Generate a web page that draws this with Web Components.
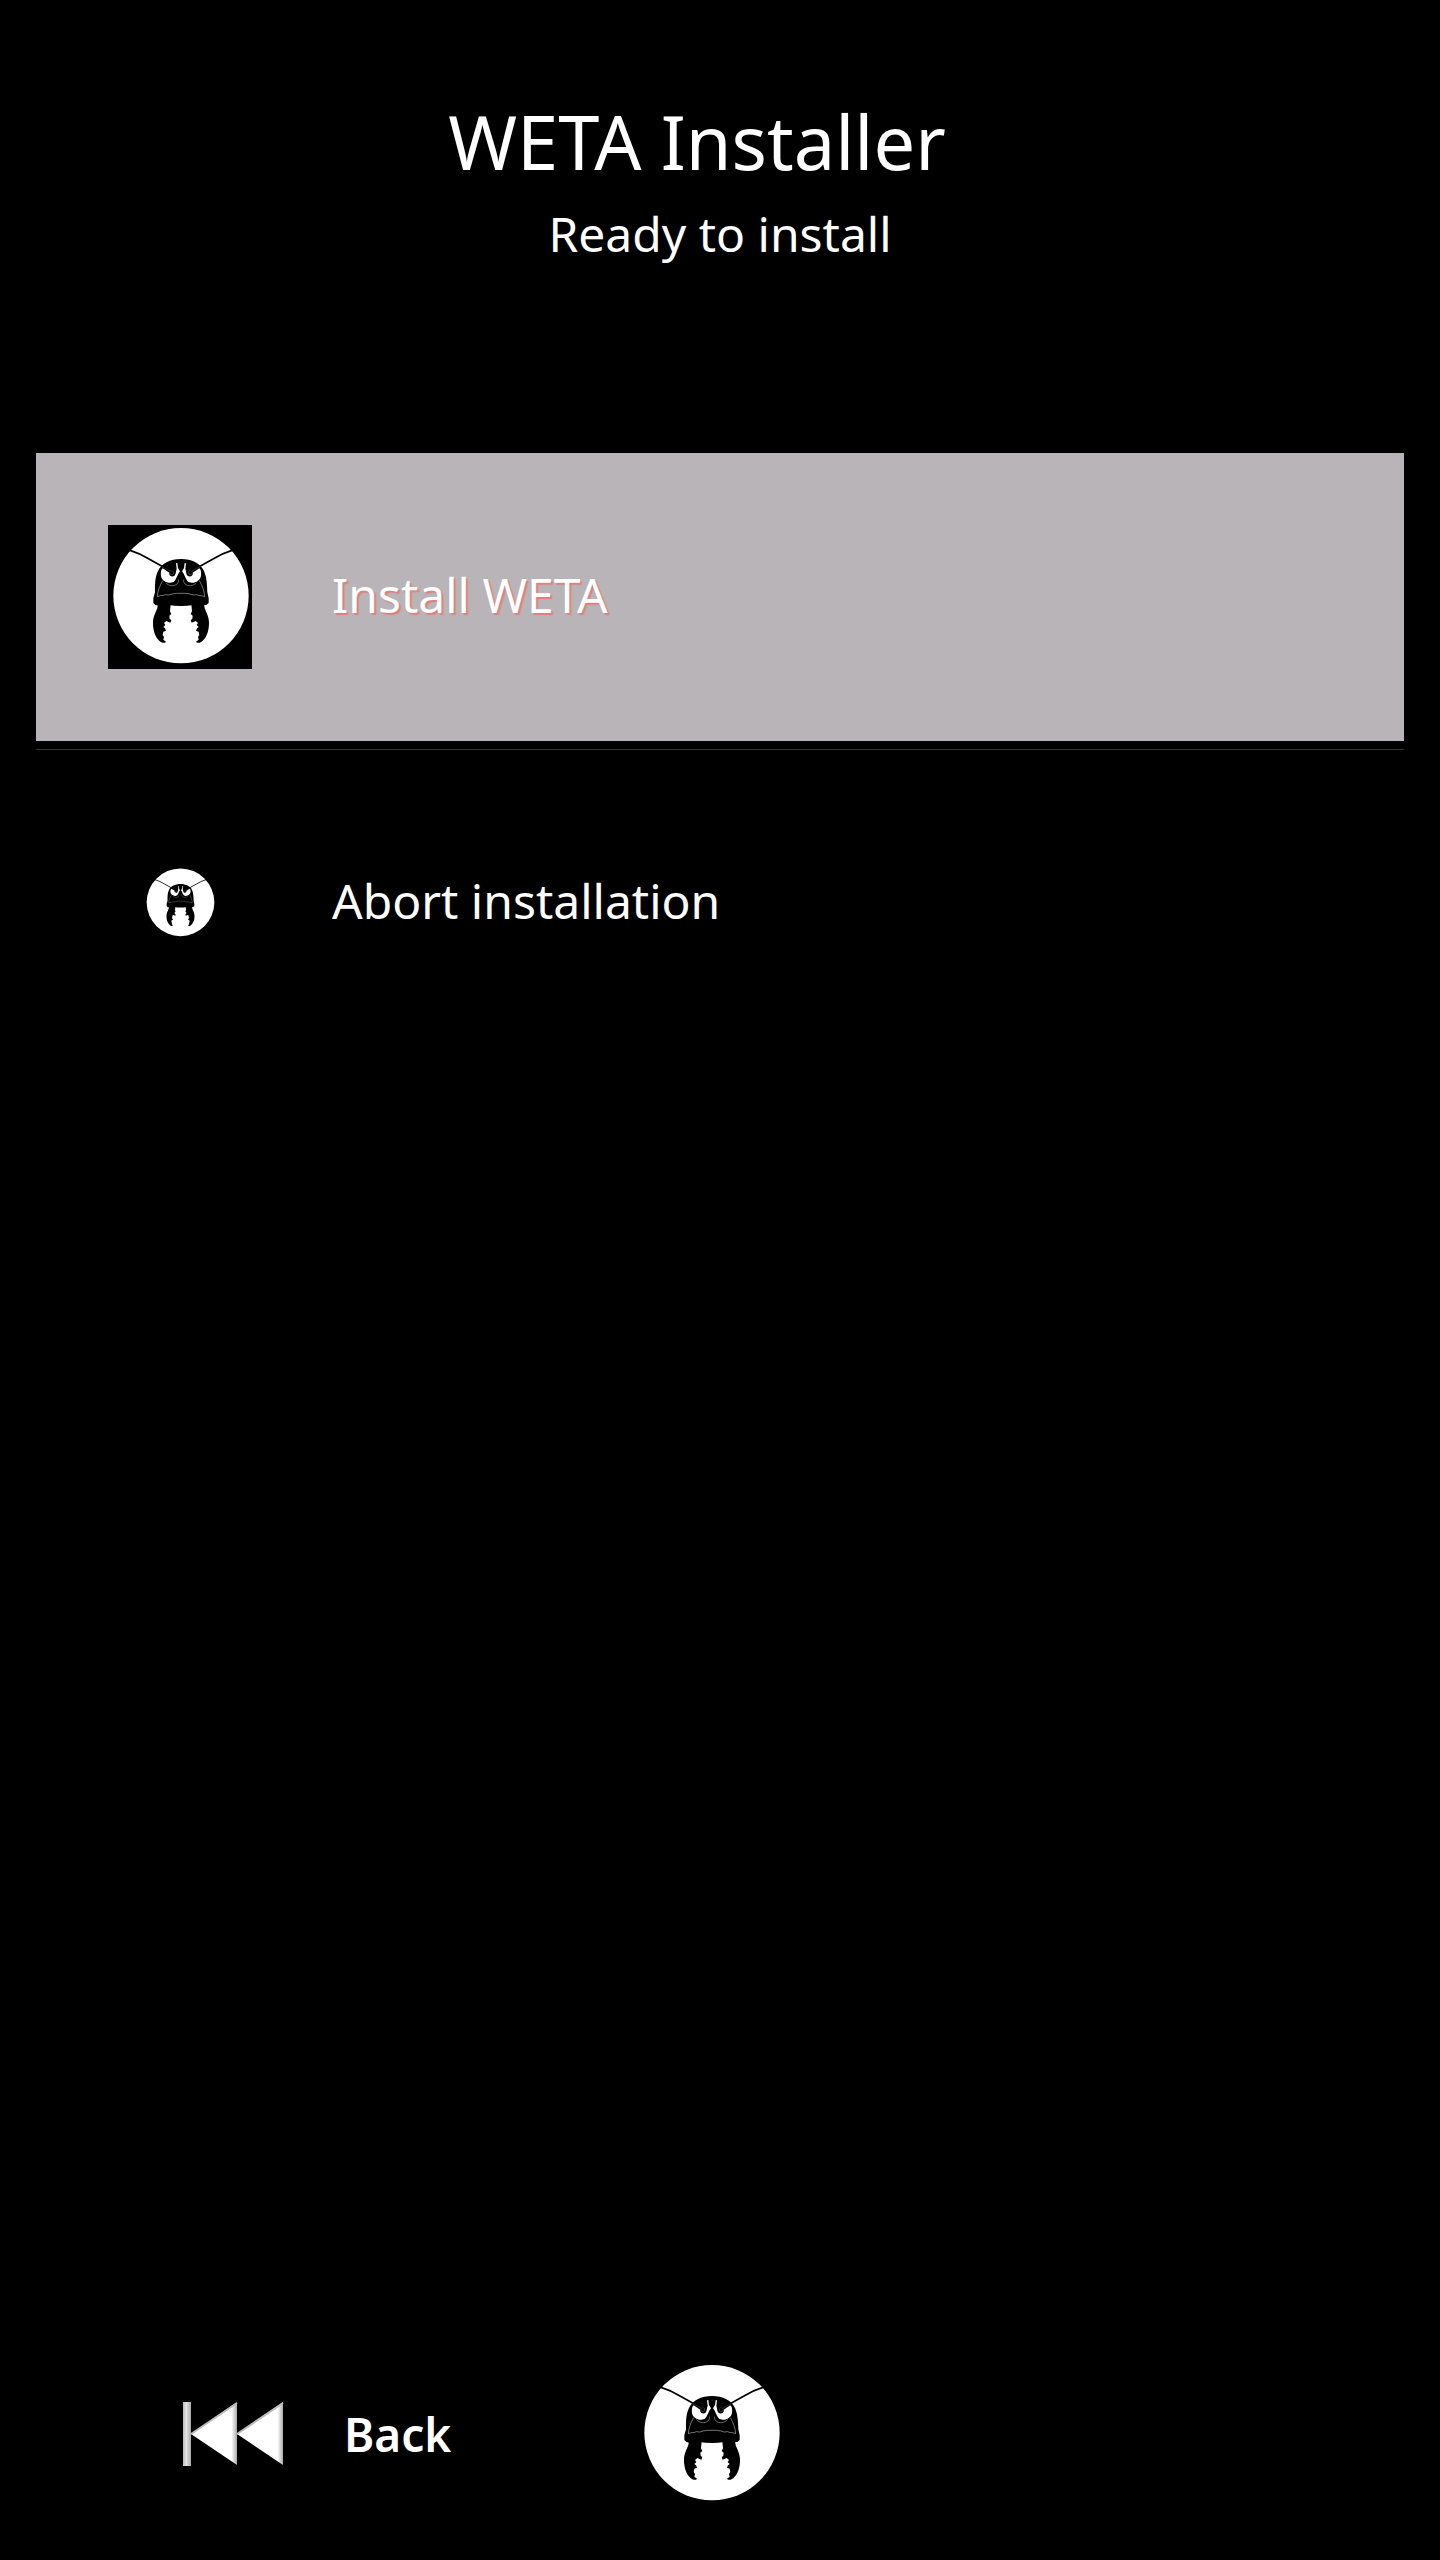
<!DOCTYPE html>
<html lang="en">
<head>
<meta charset="utf-8">
<meta name="viewport" content="width=device-width, initial-scale=1">
<title>WETA Installer</title>
<style>
    body {
        margin: 0;
        background: #000;
        color: #fff;
        font-family: "Noto Sans", "Open Sans", sans-serif;
    }
</style>
</head>
<body>

<installer-screen>
    <installer-header slot="header">
        WETA Installer
        <span slot="status">Ready to install</span>
    </installer-header>
    <menu-item selected>Install WETA</menu-item>
    <menu-item>Abort installation</menu-item>
    <nav-bar slot="footer">Back</nav-bar>
</installer-screen>

<script>
const logoTemplate = document.createElement('template');
logoTemplate.innerHTML = `
<style>
    :host {
        display: block;
        flex: none;
        width: 144px;
        height: 144px;
        background: #000;
    }

    svg {
        display: block;
        width: 100%;
        height: 100%;
    }
</style>

<svg viewBox="24 30 432 432" aria-hidden="true">
    <circle cx="243" cy="242" r="203" fill="#fff"/>
    <!-- head -->
    <path d="M243 132C275 132 303 145 313 170C321 190 321 212 322 232L326 250V264L319 270C306 271 294 269 280 270Q262 273 243 273Q222 273 205 270C192 269 181 272 167 271L160 264V250L165 232C165 212 164 190 173 170C183 145 211 132 243 132Z"/>
    <!-- jaws -->
    <path id="jaw" d="M173 268C175 284 160 297 159 321C158 350 169 373 184 382Q194 386 198 380L190 374L192 366L188 360L190 350L198 347L195 340L190 336L196 330L192 324L199 318L211 323L214 316L209 311L208 302L214 297L210 289L212 268Z"/>
    <use href="#jaw" transform="matrix(-1 0 0 1 486 0)"/>
    <!-- eye, drawn once and mirrored -->
    <g id="eye">
        <path d="M184 165C181 177 182 191 192 197C201 204 215 206 223 199C230 191 232 179 240 169L234 159L232 144L228 145L230 161C227 170 228 180 221 184C213 186 206 181 208 173L188 160Z" fill="#fff"/>
        <circle cx="215" cy="173" r="7" fill="#000"/>
        <circle cx="215" cy="173" r="6" fill="none" stroke="#999" stroke-width="1"/>
        <path d="M197 203C204 213 223 216 232 206Q236 201 236 194" fill="none" stroke="#999" stroke-width="2"/>
        <path d="M188 197C180 211 173 227 172 245L181 242Q190 243 196 239Q207 242 216 237Q229 234 243 235" fill="none" stroke="#aaa" stroke-width="2"/>
        <path d="M90 106Q120 115 147 132L217 171" fill="none" stroke="#000" stroke-width="5"/>
        <path d="M184 154L214 170" stroke="#777" stroke-width="1"/>
    </g>
    <use href="#eye" transform="matrix(-1 0 0 1 486 0)"/>
</svg>
`;

class WetaLogo extends HTMLElement {
    constructor() {
        super();
        this.attachShadow({ mode: 'open' }).appendChild(logoTemplate.content.cloneNode(true));
    }
}

const headerTemplate = document.createElement('template');
headerTemplate.innerHTML = `
<style>
    :host {
        display: block;
        text-align: center;
    }

    h1, p {
        margin: 0;
        font-weight: 400;
    }

    h1 {
        padding-right: 46px;
        font-size: 74px;
        line-height: 104px;
    }

    p {
        font-size: 48px;
        line-height: 80px;
    }
</style>

<h1><slot></slot></h1>
<p><slot name="status"></slot></p>
`;

class InstallerHeader extends HTMLElement {
    constructor() {
        super();
        this.attachShadow({ mode: 'open' }).appendChild(headerTemplate.content.cloneNode(true));
    }
}

const itemTemplate = document.createElement('template');
itemTemplate.innerHTML = `
<style>
    :host {
        display: block;
    }

    button {
        display: flex;
        align-items: center;
        gap: 80px;
        width: 100%;
        height: 288px;
        padding: 0 72px;
        border: 0;
        background: none;
        color: inherit;
        font: inherit;
        font-size: 48px;
        line-height: 64px;
        text-align: left;
    }

    .icon {
        display: flex;
        justify-content: center;
        width: 144px;
    }

    .label {
        padding-bottom: 4px;
    }

    weta-logo {
        width: 72px;
        height: 72px;
    }

    hr {
        display: none;
        height: 1px;
        margin: 8px 0 9px;
        border: 0;
        background: #333;
    }

    :host([selected]) button {
        background: #b8b4b8;
        text-shadow: 2px 2px 1px #e08080;
    }

    :host([selected]) weta-logo {
        width: 144px;
        height: 144px;
    }

    :host([selected]) hr {
        display: block;
    }
</style>

<button type="button">
    <span class="icon"><weta-logo></weta-logo></span>
    <span class="label"><slot></slot></span>
</button>
<hr>
`;

class MenuItem extends HTMLElement {
    constructor() {
        super();
        this.attachShadow({ mode: 'open' }).appendChild(itemTemplate.content.cloneNode(true));
    }
}

const navTemplate = document.createElement('template');
navTemplate.innerHTML = `
<style>
    :host {
        display: grid;
        grid-template-columns: 1fr auto 1fr;
        align-items: center;
        padding: 0 18px 54px 0;
    }

    button {
        display: flex;
        align-items: center;
        gap: 60px;
        padding: 0 0 0 182px;
        border: 0;
        background: none;
        color: inherit;
        font: inherit;
        font-size: 46px;
        font-weight: 600;
        line-height: 64px;
    }

    svg {
        display: block;
        width: 102px;
        height: 64px;
    }
</style>

<button type="button">
    <svg viewBox="0 0 102 64" aria-hidden="true">
        <defs>
            <linearGradient id="edge">
                <stop offset="0" stop-color="#fff"/>
                <stop offset=".88" stop-color="#fff"/>
                <stop offset="1" stop-color="#aaa"/>
            </linearGradient>
            <linearGradient id="bar">
                <stop offset="0" stop-color="#bbb"/>
                <stop offset=".4" stop-color="#e8e6e8"/>
                <stop offset="1" stop-color="#aaa"/>
            </linearGradient>
        </defs>
        <path d="M1 0H9V64H1Z" fill="url(#bar)"/>
        <path d="M9 32L55 0V63Z" fill="url(#edge)"/>
        <path d="M55 32L101 0V63Z" fill="url(#edge)"/>
        <path d="M9 32L55 1M55 32L101 1" stroke="#bbb" stroke-width="2"/>
    </svg>
    <span><slot></slot></span>
</button>
<weta-logo></weta-logo>
`;

class NavBar extends HTMLElement {
    constructor() {
        super();
        this.attachShadow({ mode: 'open' }).appendChild(navTemplate.content.cloneNode(true));
    }
}

const screenTemplate = document.createElement('template');
screenTemplate.innerHTML = `
<style>
    :host {
        display: flex;
        flex-direction: column;
        box-sizing: border-box;
        min-height: 100vh;
        padding-top: 90px;
    }

    main {
        flex: 1;
        padding: 179px 36px 0;
    }
</style>

<slot name="header"></slot>
<main><slot></slot></main>
<slot name="footer"></slot>
`;

class InstallerScreen extends HTMLElement {
    constructor() {
        super();
        this.attachShadow({ mode: 'open' }).appendChild(screenTemplate.content.cloneNode(true));
    }
}

customElements.define('weta-logo', WetaLogo);
customElements.define('installer-header', InstallerHeader);
customElements.define('menu-item', MenuItem);
customElements.define('nav-bar', NavBar);
customElements.define('installer-screen', InstallerScreen);
</script>
</body>
</html>
